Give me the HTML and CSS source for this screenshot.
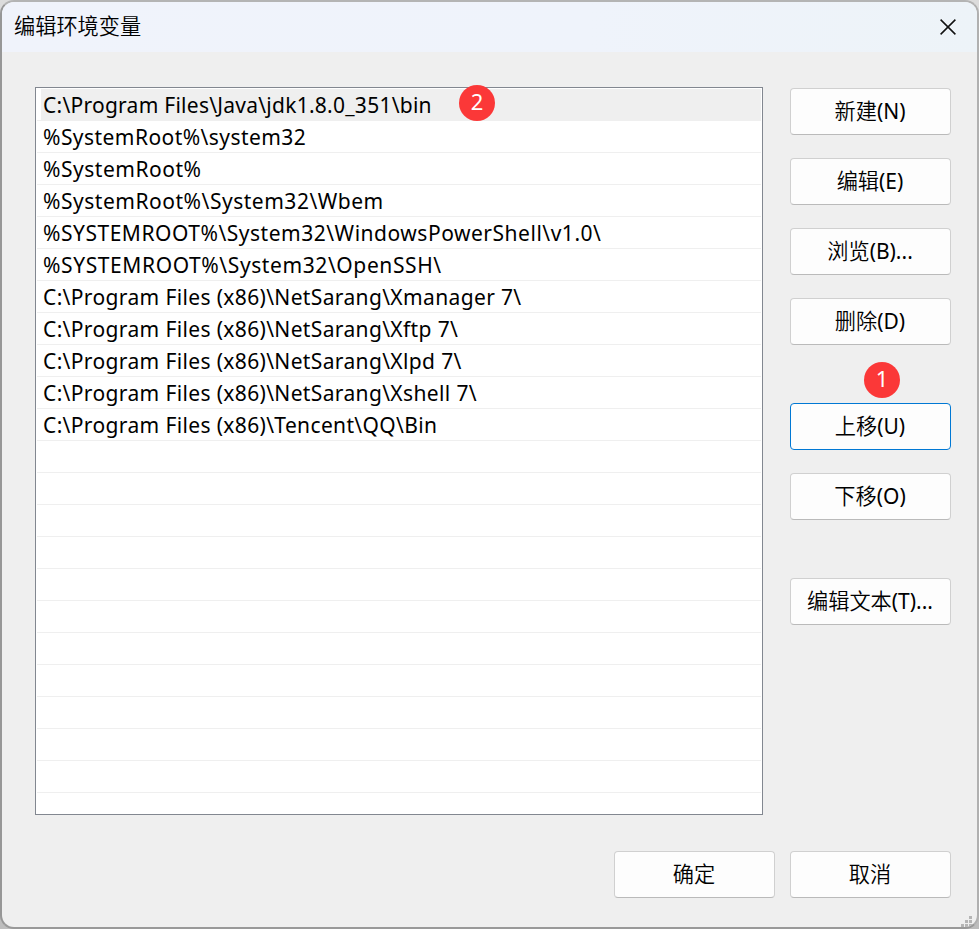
FILE: index.html
```html
<!DOCTYPE html>
<html lang="zh-CN">
<head>
<meta charset="utf-8">
<title>编辑环境变量</title>
<link rel="stylesheet" href="styles.css">
</head>
<body>
<main class="dialog">
  <header class="titlebar">
    <h1 class="title">编辑环境变量</h1>
    <svg class="close" viewBox="0 0 16 16" width="16" height="16"><path d="M.6.6l14.8 14.8M15.4.6L.6 15.4" fill="none" stroke="#111" stroke-width="1.5"/></svg>
  </header>
  <div class="content">
    <ul class="list">
      <li class="row java selected"><span>C:\Program Files\Java\jdk1.8.0_351\bin</span><b class="badge badge-row">2</b></li>
      <li class="row system"><span>%SystemRoot%\system32</span></li>
      <li class="row root"><span>%SystemRoot%</span></li>
      <li class="row root"><span>%SystemRoot%\System32\Wbem</span></li>
      <li class="row root"><span>%SYSTEMROOT%\System32\WindowsPowerShell\v1.0\</span></li>
      <li class="row ssh"><span>%SYSTEMROOT%\System32\OpenSSH\</span></li>
      <li class="row"><span>C:\Program Files (x86)\NetSarang\Xmanager 7\</span></li>
      <li class="row"><span>C:\Program Files (x86)\NetSarang\Xftp 7\</span></li>
      <li class="row"><span>C:\Program Files (x86)\NetSarang\Xlpd 7\</span></li>
      <li class="row"><span>C:\Program Files (x86)\NetSarang\Xshell 7\</span></li>
      <li class="row"><span>C:\Program Files (x86)\Tencent\QQ\Bin</span></li>
      <li class="row"></li><li class="row"></li><li class="row"></li><li class="row"></li>
      <li class="row"></li><li class="row"></li><li class="row"></li><li class="row"></li>
      <li class="row"></li><li class="row"></li><li class="row"></li>
    </ul>
    <div class="actions">
      <button class="btn">新建<span class="key">(N)</span></button>
      <button class="btn">编辑<span class="key">(E)</span></button>
      <button class="btn">浏览<span class="key">(B)...</span></button>
      <button class="btn">删除<span class="key">(D)</span></button>
      <button class="btn focused group">上移<span class="key">(U)</span><b class="badge badge-button">1</b></button>
      <button class="btn">下移<span class="key">(O)</span></button>
      <button class="btn group">编辑文本<span class="key">(T)...</span></button>
    </div>
  </div>
  <footer class="footer">
    <button class="btn">确定</button>
    <button class="btn">取消</button>
  </footer>
  <svg class="grip" viewBox="0 0 11 11" width="11" height="11"><path d="M8 0h3v3H8zM4 4h3v3H4zM8 4h3v3H8zM0 8h3v3H0zM4 8h3v3H4zM8 8h3v3H8z" fill="#b5b5b5"/></svg>
</main>
</body>
</html>
```
FILE: styles.css
```css
* { box-sizing: border-box; }
body {
  margin: 0;
  width: 979px;
  height: 929px;
  overflow: hidden;
  background: linear-gradient(#dcdcdc, #bdbdbd);
  font-family: "Noto Sans", "Noto Sans CJK SC", sans-serif;
  color: #000;
}
.dialog {
  position: relative;
  width: 979px;
  height: 929px;
  border: 2px solid;
  border-color: #b4b4b4 #b0b0b0 #999 #979797;
  border-radius: 14px;
  background: #efefef;
  overflow: hidden;
}
.titlebar {
  display: flex;
  justify-content: space-between;
  align-items: flex-start;
  height: 50px;
  padding: 8px 21px 0 12px;
  background: linear-gradient(90deg, #f0f3fb, #eff3fb 60%, #edf3f8);
}
.title {
  margin: 0;
  font: 350 21.2px/30px "Noto Sans CJK SC", sans-serif;
}
.close { display: block; margin-top: 9px; }
.content {
  display: flex;
  gap: 27px;
  padding: 35px 26px 0 33px;
}
.list {
  width: 728px;
  height: 728px;
  margin: 0;
  padding: 1px 1px 0;
  border: 1px solid #828790;
  background: #fff;
  list-style: none;
}
.row {
  height: 32px;
  padding-left: 6px;
  border-bottom: 1px solid #efefef;
  font-size: 21px;
  line-height: 32px;
  letter-spacing: .36px;
  white-space: pre;
}
.java { letter-spacing: .26px; }
.system { letter-spacing: .44px; }
.root { letter-spacing: .52px; }
.ssh { letter-spacing: .6px; }
.selected {
  position: relative;
  background: linear-gradient(90deg, #fff 4px, #efefef 4px);
}
.badge {
  position: absolute;
  width: 36px;
  height: 36px;
  border-radius: 50%;
  background: #fb3838;
  color: #fff;
  font: 400 22px/32px "Noto Sans", sans-serif;
  letter-spacing: 0;
  text-align: center;
}
.badge-row { left: 422px; top: -4px; }
.badge-button { left: 73px; top: -42px; }
.actions {
  display: flex;
  flex-direction: column;
  gap: 23px;
  padding-top: 1px;
}
.btn {
  position: relative;
  width: 161px;
  height: 47px;
  padding: 0 1px 2px 0;
  border: 1px solid #d0d0d0;
  border-bottom-color: #bababa;
  border-radius: 4px;
  background: #fdfdfd;
  color: #000;
  font: 350 21.2px/43px "Noto Sans", "Noto Sans CJK SC", sans-serif;
  white-space: nowrap;
}
.key { font-size: 21px; font-weight: 400; }
.group { margin-top: 35px; }
.focused { border-color: #0078d4; }
.footer {
  display: flex;
  justify-content: flex-end;
  gap: 15px;
  padding: 36px 26px 0 0;
}
.grip {
  position: absolute;
  right: 5px;
  bottom: 0;
}
```
